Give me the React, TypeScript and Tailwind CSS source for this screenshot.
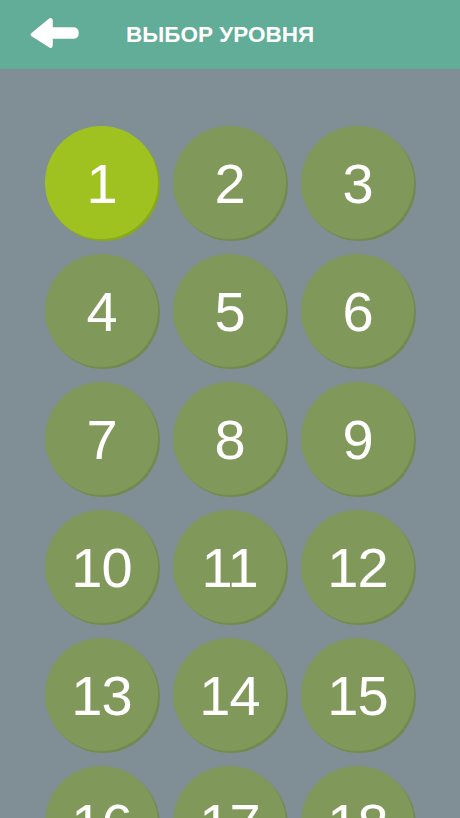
import React from "react";

const LEVELS = Array.from({ length: 18 }, (_, i) => i + 1);

function BackArrow() {
  return (
    <svg width="52" height="36" viewBox="0 0 52 36" className="block">
      <path
        d="M3 16.5 L20 2.5 Q23 0.5 23 4 L23 11 L44 11 Q49 11 49 16 Q49 21 44 21 L23 21 L23 28 Q23 31.5 20 29.5 L3 18.5 Q1.5 17.5 3 16.5 Z"
        fill="#ffffff"
        stroke="#ffffff"
        strokeWidth="1.5"
        strokeLinejoin="round"
      />
    </svg>
  );
}

export default function App() {
  return (
    <div className="w-[460px] h-[818px] overflow-hidden bg-[#808e96] font-['Liberation_Sans',Arial,sans-serif]">
      {/* Header */}
      <header className="h-[69px] bg-[#62ad97] flex items-center pl-[29px]">
        <BackArrow />
        <h1 className="ml-[45px] mt-[2px] text-white font-bold text-[22.5px] leading-none">
          ВЫБОР УРОВНЯ
        </h1>
      </header>

      {/* Level grid */}
      <div className="grid grid-cols-[repeat(3,113px)] gap-x-[15px] gap-y-[15px] pt-[57px] pl-[45px]">
        {LEVELS.map((n) => {
          const active = n === 1;
          return (
            <button
              key={n}
              className={`w-[113px] h-[113px] rounded-full flex items-center justify-center text-white text-[56px] tracking-[-1px] leading-none ${
                active
                  ? "bg-[#a0c220] shadow-[2px_2px_0_#8aa81c]"
                  : "bg-[#80985a] shadow-[2px_2px_0_#728a50]"
              }`}
            >
              <span className="mt-[2px]">{n}</span>
            </button>
          );
        })}
      </div>
    </div>
  );
}
